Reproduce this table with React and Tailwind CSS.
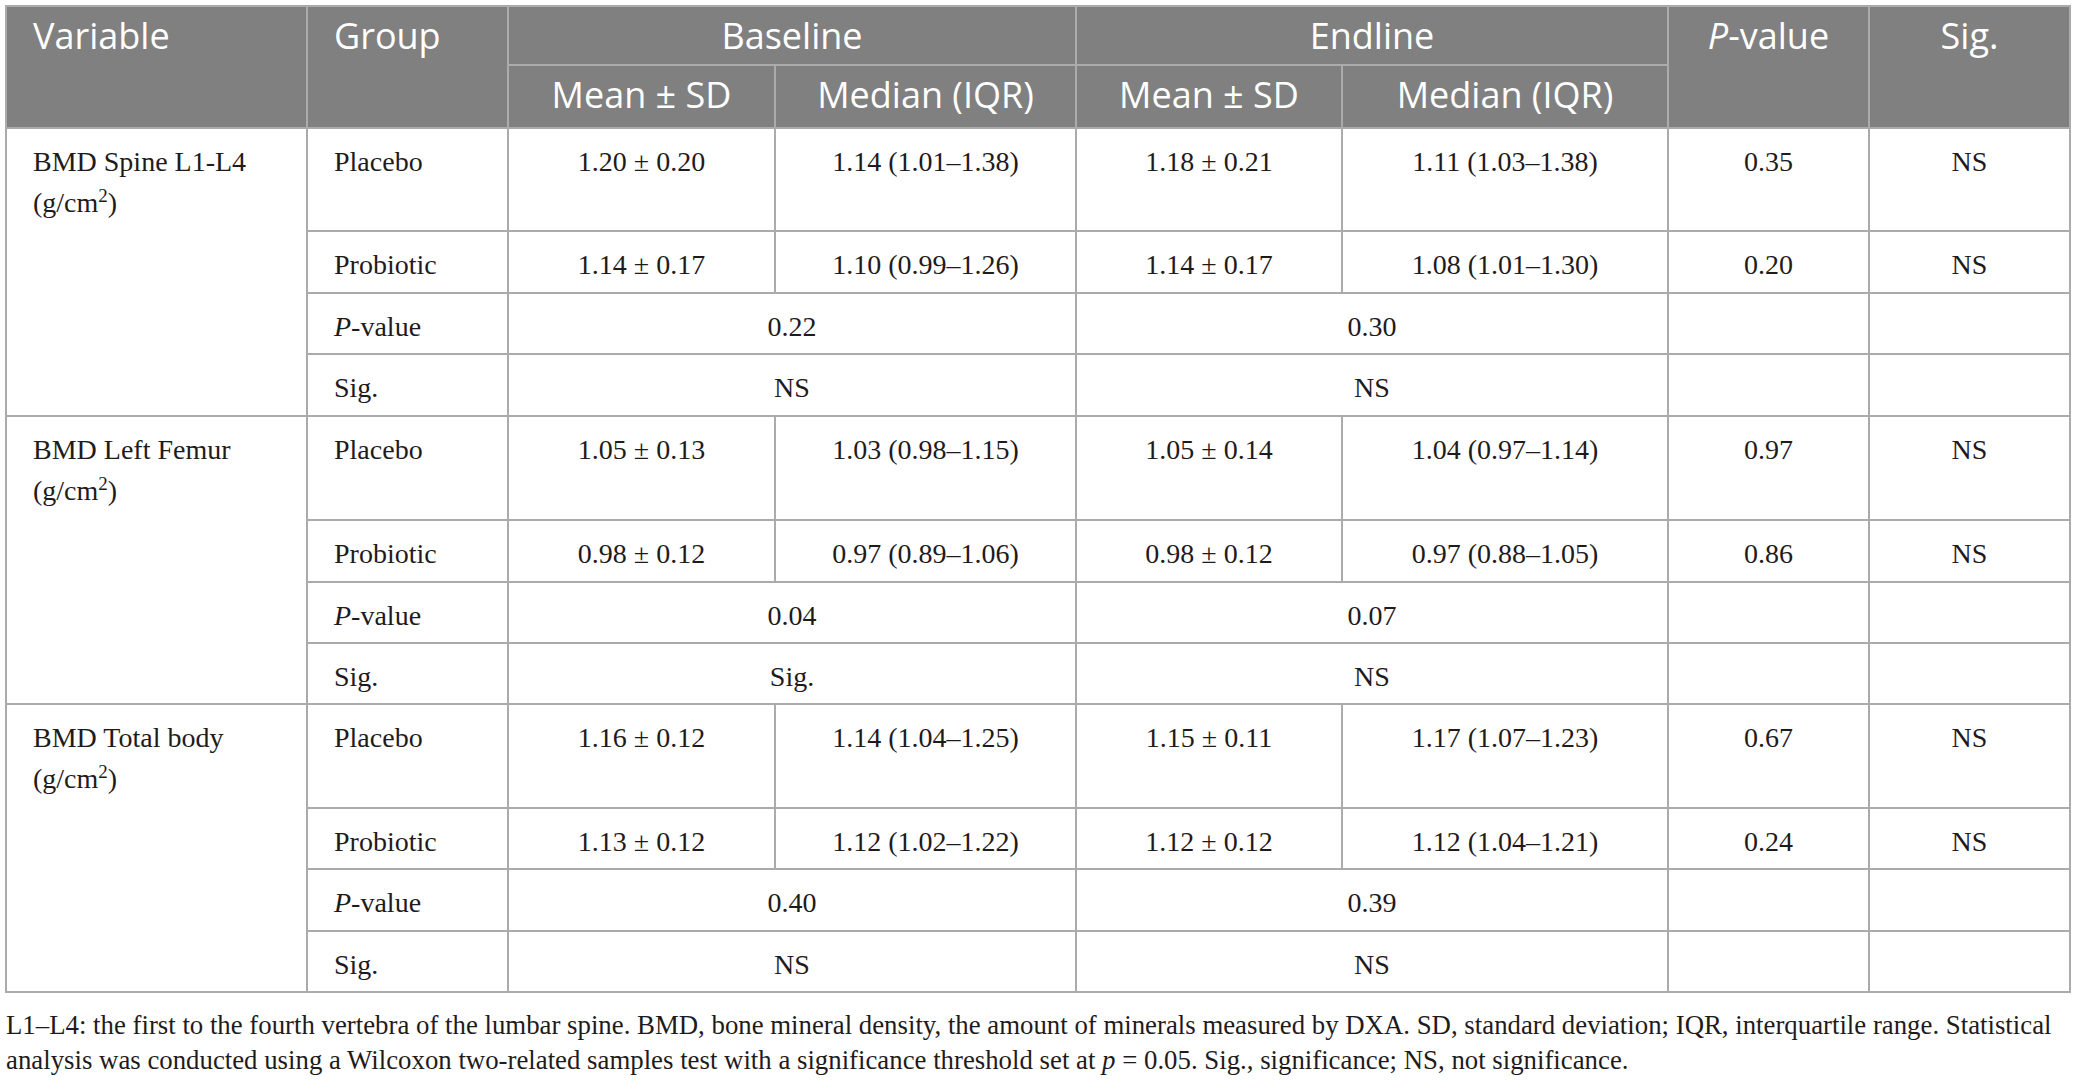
import React from "react";

const groups = [
  {
    name: "BMD Spine L1-L4",
    rows: [
      ["Placebo", "1.20 ± 0.20", "1.14 (1.01–1.38)", "1.18 ± 0.21", "1.11 (1.03–1.38)", "0.35", "NS"],
      ["Probiotic", "1.14 ± 0.17", "1.10 (0.99–1.26)", "1.14 ± 0.17", "1.08 (1.01–1.30)", "0.20", "NS"],
    ],
    p: ["0.22", "0.30"],
    sig: ["NS", "NS"],
  },
  {
    name: "BMD Left Femur",
    rows: [
      ["Placebo", "1.05 ± 0.13", "1.03 (0.98–1.15)", "1.05 ± 0.14", "1.04 (0.97–1.14)", "0.97", "NS"],
      ["Probiotic", "0.98 ± 0.12", "0.97 (0.89–1.06)", "0.98 ± 0.12", "0.97 (0.88–1.05)", "0.86", "NS"],
    ],
    p: ["0.04", "0.07"],
    sig: ["Sig.", "NS"],
  },
  {
    name: "BMD Total body",
    rows: [
      ["Placebo", "1.16 ± 0.12", "1.14 (1.04–1.25)", "1.15 ± 0.11", "1.17 (1.07–1.23)", "0.67", "NS"],
      ["Probiotic", "1.13 ± 0.12", "1.12 (1.02–1.22)", "1.12 ± 0.12", "1.12 (1.04–1.21)", "0.24", "NS"],
    ],
    p: ["0.40", "0.39"],
    sig: ["NS", "NS"],
  },
];

const H = "bg-[#808080] text-white font-['Open_Sans',sans-serif] text-[36px] leading-[49px] pt-[4px] whitespace-nowrap";
const B = "bg-white text-[#1f1b1c] font-['Liberation_Serif',serif] text-[28px] leading-[34px] pt-[16px] whitespace-nowrap";

function Group({ g }) {
  const [r1, r2] = g.rows;
  return (
    <>
      <div className={`${B} row-span-4 px-[26px]`}>
        <div>{g.name}</div>
        <div className="mt-[7px]">
          (g/cm<span className="relative -top-[10px] text-[19px] leading-none">2</span>)
        </div>
      </div>
      <div className={`${B} px-[26px]`}>{r1[0]}</div>
      {r1.slice(1).map((v, i) => (
        <div key={i} className={`${B} text-center`}>{v}</div>
      ))}
      <div className={`${B} px-[26px]`}>{r2[0]}</div>
      {r2.slice(1).map((v, i) => (
        <div key={i} className={`${B} text-center`}>{v}</div>
      ))}
      <div className={`${B} px-[26px]`}>
        <i>P</i>-value
      </div>
      <div className={`${B} col-span-2 text-center`}>{g.p[0]}</div>
      <div className={`${B} col-span-2 text-center`}>{g.p[1]}</div>
      <div className={B}></div>
      <div className={B}></div>
      <div className={`${B} px-[26px]`}>Sig.</div>
      <div className={`${B} col-span-2 text-center`}>{g.sig[0]}</div>
      <div className={`${B} col-span-2 text-center`}>{g.sig[1]}</div>
      <div className={B}></div>
      <div className={B}></div>
    </>
  );
}

export default function App() {
  return (
    <div className="w-[2077px] min-h-[1083px] bg-white pt-[5px]">
      <div className="ml-[5px] w-[2066px] grid grid-cols-[299px_199px_265px_299px_264px_324px_199px_199px] grid-rows-[57px_61px_101px_60px_59px_60px_102px_60px_59px_59px_102px_59px_60px_59px] gap-[2px] p-[2px] bg-[#ababab]">
        <div className={`${H} row-span-2 px-[26px]`}>Variable</div>
        <div className={`${H} row-span-2 px-[26px]`}>Group</div>
        <div className={`${H} col-span-2 text-center`}>Baseline</div>
        <div className={`${H} col-span-2 text-center`}>Endline</div>
        <div className={`${H} row-span-2 text-center`}>
          <i>P</i>-value
        </div>
        <div className={`${H} row-span-2 text-center`}>Sig.</div>
        <div className={`${H} text-center`}>Mean ± SD</div>
        <div className={`${H} text-center`}>Median (IQR)</div>
        <div className={`${H} text-center`}>Mean ± SD</div>
        <div className={`${H} text-center`}>Median (IQR)</div>
        {groups.map((g, i) => (
          <Group key={i} g={g} />
        ))}
      </div>
      <div className="ml-[6px] mt-[15px] font-['Liberation_Serif',serif] text-[26.8px] leading-[35px] text-[#1f1b1c]">
        <div className="whitespace-nowrap">
          L1–L4: the first to the fourth vertebra of the lumbar spine. BMD, bone mineral density, the amount of minerals measured by DXA. SD, standard deviation; IQR, interquartile range. Statistical
        </div>
        <div className="whitespace-nowrap">
          analysis was conducted using a Wilcoxon two-related samples test with a significance threshold set at <i>p</i> = 0.05. Sig., significance; NS, not significance.
        </div>
      </div>
    </div>
  );
}
